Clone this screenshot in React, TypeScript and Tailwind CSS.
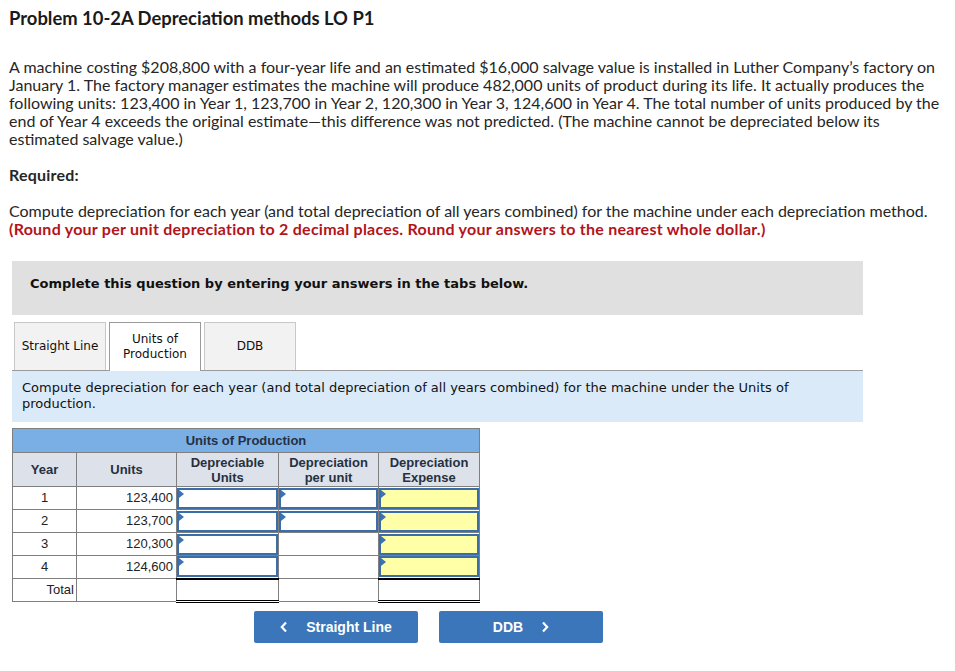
import React from 'react'

const rows = [
  { year: '1', units: '123,400', perUnit: true },
  { year: '2', units: '123,700', perUnit: true },
  { year: '3', units: '120,300', perUnit: false },
  { year: '4', units: '124,600', perUnit: false },
]

function Flag() {
  return (
    <span className="absolute left-0 top-0 h-0 w-0 border-y-[4px] border-l-[5px] border-y-transparent border-l-[#3b73b9]" />
  )
}

function InputCell({ yellow = false }: { yellow?: boolean }) {
  return (
    <td className="border border-[#7f7f7f] p-0">
      <div
        className={`relative h-[21px] border-2 border-[#3b6ea8] ${yellow ? 'bg-[#ffffa8]' : 'bg-white'}`}
      >
        <Flag />
      </div>
    </td>
  )
}

export default function App() {
  return (
    <div className="w-[955px] h-[671px] bg-white text-[#262626] font-['Lato',sans-serif]">
      <div className="px-[9px] pt-[7px]">
        <h1 className="text-[18.4px] font-bold leading-[22px] text-[#1a1a1a]">
          Problem 10-2A Depreciation methods LO P1
        </h1>

        <p className="mt-[29px] w-[937px] text-[16px] leading-[18px]">
          A machine costing $208,800 with a four-year life and an estimated $16,000 salvage value is installed in Luther
          Company’s factory on January 1. The factory manager estimates the machine will produce 482,000 units of product
          during its life. It actually produces the following units: 123,400 in Year 1, 123,700 in Year 2, 120,300 in Year
          3, 124,600 in Year 4. The total number of units produced by the end of Year 4 exceeds the original estimate—this
          difference was not predicted. (The machine cannot be depreciated below its estimated salvage value.)
        </p>

        <p className="mt-[18px] text-[16px] font-bold leading-[18px] tracking-[0.2px]">Required:</p>

        <p className="mt-[18px] text-[16px] leading-[18px]">
          Compute depreciation for each year (and total depreciation of all years combined) for the machine under each
          depreciation method.
          <br />
          <span className="font-bold tracking-[0.25px] text-[#b3131b]">
            (Round your per unit depreciation to 2 decimal places. Round your answers to the nearest whole dollar.)
          </span>
        </p>
      </div>

      <div className="ml-[12px] w-[851px] font-['DejaVu_Sans',Verdana,sans-serif]">
        <div className="mt-[23px] h-[54px] bg-[#e0e0e0] px-[18px] pt-[15px]">
          <p className="text-[13px] font-bold leading-[16px] text-[#111]">
            Complete this question by entering your answers in the tabs below.
          </p>
        </div>

        <div className="mt-[7px] flex gap-[3px] pl-[2px]">
          <div className="flex h-[48px] w-[92px] items-center justify-center border border-b-0 border-[#c8c8c8] bg-[#f2f2f2] text-[12px] leading-[15px] text-[#111]">
            Straight Line
          </div>
          <div className="-mb-px z-10 flex h-[49px] w-[92px] flex-col items-center justify-center border border-b-0 border-[#9a9a9a] bg-white text-center text-[12px] leading-[15px] text-[#111]">
            <span>Units of</span>
            <span>Production</span>
          </div>
          <div className="flex h-[48px] w-[92px] items-center justify-center border border-b-0 border-[#c8c8c8] bg-[#f2f2f2] text-[12px] leading-[15px] text-[#111]">
            DDB
          </div>
        </div>

        <div className="border-t border-[#9a9a9a] bg-[#daeaf8] pl-[10px] pr-[60px] pb-[10px] pt-[9px]">
          <p className="text-[13px] leading-[16px] text-[#111]">
            Compute depreciation for each year (and total depreciation of all years combined) for the machine under the
            Units of production.
          </p>
        </div>
      </div>

      <div className="ml-[12px] mt-[6px] font-['Liberation_Sans',Arial,sans-serif] text-[13px] text-[#222]">
        <table className="border-collapse border border-[#7f7f7f]">
          <colgroup>
            <col className="w-[64px]" />
            <col className="w-[100px]" />
            <col className="w-[102px]" />
            <col className="w-[100px]" />
            <col className="w-[101px]" />
          </colgroup>
          <thead>
            <tr className="h-[24px] bg-[#7aafe6]">
              <th colSpan={5} className="border border-[#7f7f7f] text-center font-bold leading-[15px] text-[#263040]">
                Units of Production
              </th>
            </tr>
            <tr className="h-[34px] bg-[#dde2ea] font-bold text-[#263040]">
              <th className="border border-[#7f7f7f] leading-[15px]">Year</th>
              <th className="border border-[#7f7f7f] leading-[15px]">Units</th>
              <th className="border border-[#7f7f7f] leading-[15px]">
                Depreciable
                <br />
                Units
              </th>
              <th className="border border-[#7f7f7f] leading-[15px]">
                Depreciation
                <br />
                per unit
              </th>
              <th className="border border-[#7f7f7f] leading-[15px]">
                Depreciation
                <br />
                Expense
              </th>
            </tr>
          </thead>
          <tbody>
            {rows.map((r) => (
              <tr key={r.year} className="h-[23px]">
                <td className="border border-[#7f7f7f] text-center">{r.year}</td>
                <td className="border border-[#7f7f7f] pr-[3px] text-right">{r.units}</td>
                <InputCell />
                {r.perUnit ? <InputCell /> : <td className="border border-[#7f7f7f]" />}
                <InputCell yellow />
              </tr>
            ))}
            <tr className="h-[23px]">
              <td className="border border-[#7f7f7f] pr-[2px] text-right">Total</td>
              <td className="border border-[#7f7f7f]" />
              <td className="border border-[#7f7f7f] border-t-2 border-t-black border-b-[3px] border-b-black border-double" />
              <td className="border border-[#7f7f7f]" />
              <td className="border border-[#7f7f7f] border-t-2 border-t-black border-b-[3px] border-b-black border-double" />
            </tr>
          </tbody>
        </table>
      </div>

      <div className="ml-[254px] mt-[8px] flex gap-[21px] font-['Liberation_Sans',Arial,sans-serif]">
        <button className="flex h-[32px] w-[164px] items-center justify-center gap-[18px] rounded-[2px] bg-[#3a76b9] text-[14px] font-bold text-white">
          <svg width="8" height="12" viewBox="0 0 8 12" fill="none">
            <path d="M6 1.5 1.8 6 6 10.5" stroke="white" strokeWidth="2.2" />
          </svg>
          <span>Straight Line</span>
        </button>
        <button className="flex h-[32px] w-[164px] items-center justify-center gap-[18px] rounded-[2px] bg-[#3a76b9] text-[14px] font-bold text-white">
          <span>DDB</span>
          <svg width="8" height="12" viewBox="0 0 8 12" fill="none">
            <path d="M2 1.5 6.2 6 2 10.5" stroke="white" strokeWidth="2.2" />
          </svg>
        </button>
      </div>
    </div>
  )
}
